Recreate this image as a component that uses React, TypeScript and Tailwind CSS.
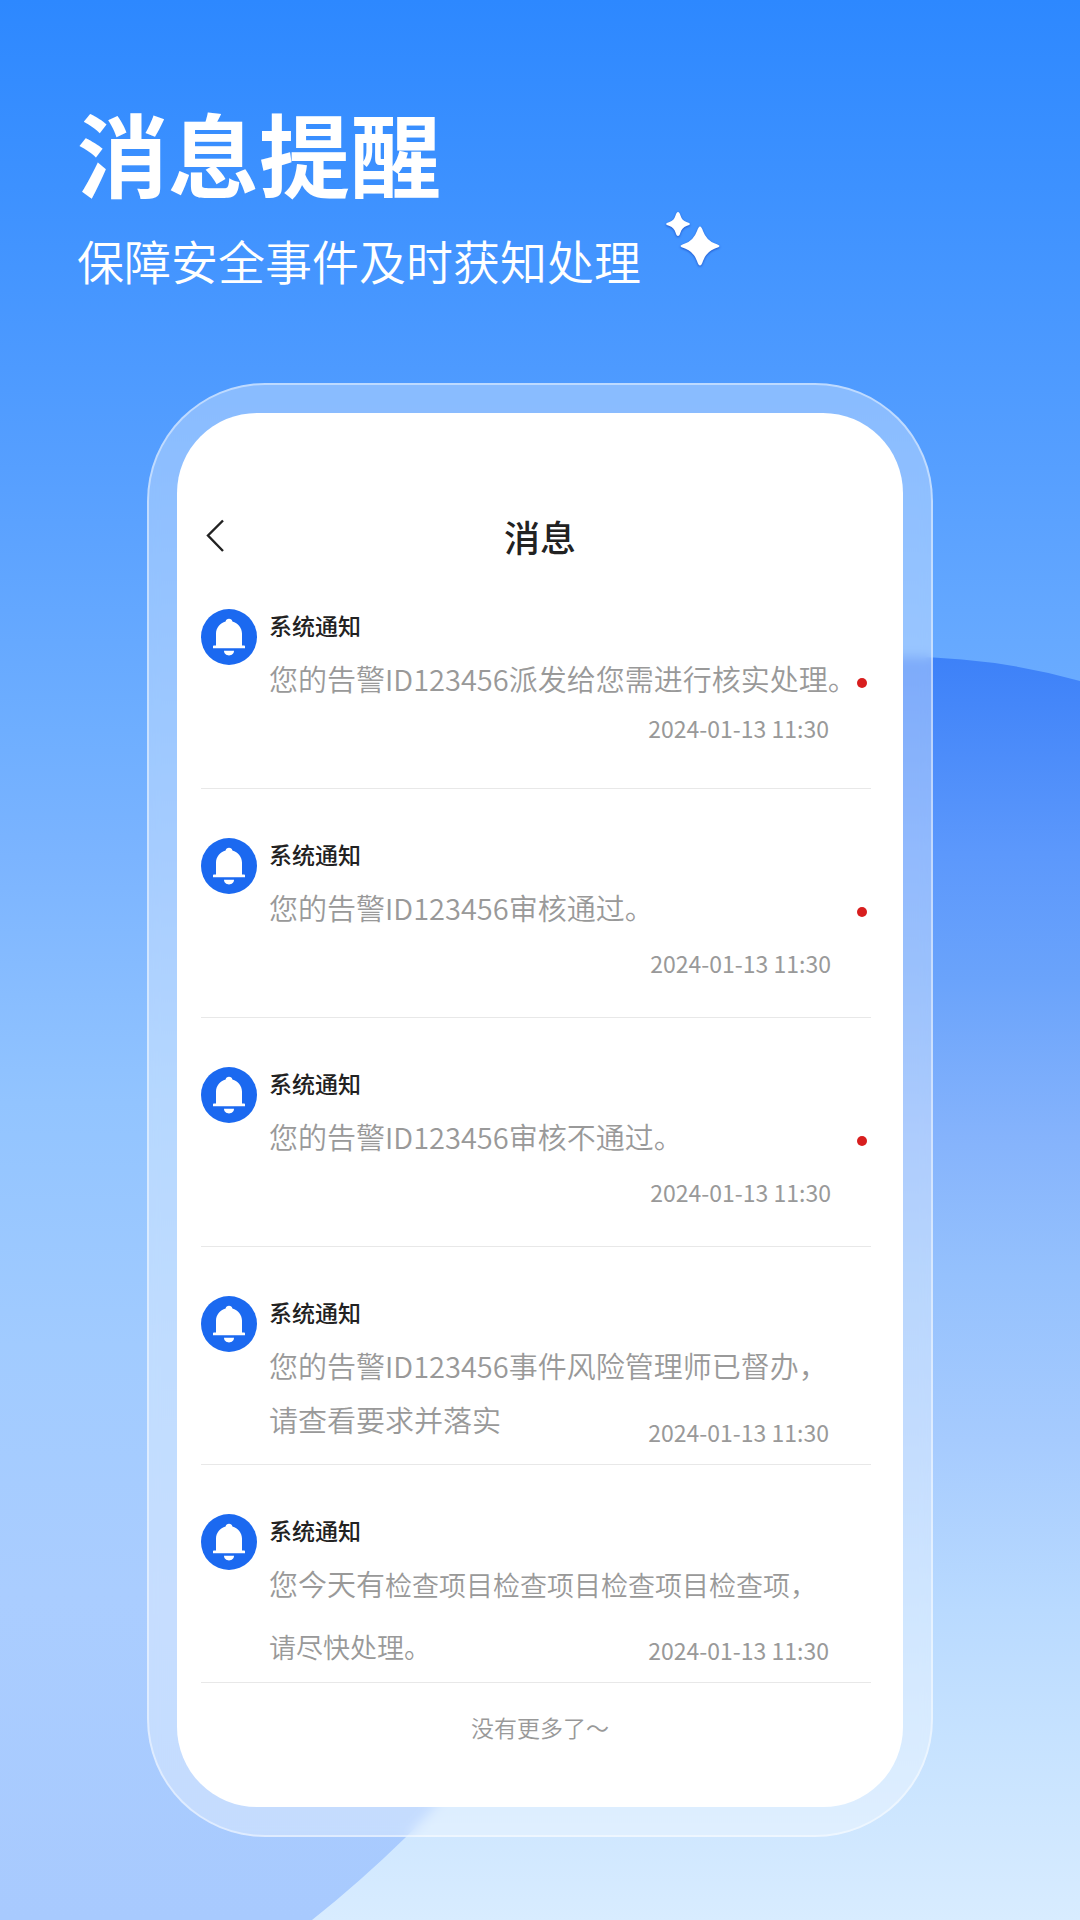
import { clsx } from "clsx";

interface Notice {
  lines: string[];
  // opening words set a step larger than the rest of the message
  lead?: string;
  time: string;
  unread?: boolean;
  size: "first" | "single" | "double" | "loose";
}

const notices: Notice[] = [
  {
    lines: ["您的告警ID123456派发给您需进行核实处理。"],
    time: "2024-01-13 11:30",
    unread: true,
    size: "first",
  },
  {
    lines: ["您的告警ID123456审核通过。"],
    time: "2024-01-13 11:30",
    unread: true,
    size: "single",
  },
  {
    lines: ["您的告警ID123456审核不通过。"],
    time: "2024-01-13 11:30",
    unread: true,
    size: "single",
  },
  {
    lines: ["您的告警ID123456事件风险管理师已督办，", "请查看要求并落实"],
    time: "2024-01-13 11:30",
    size: "double",
  },
  {
    lead: "您今天有",
    lines: ["检查项目检查项目检查项目检查项，", "请尽快处理。"],
    time: "2024-01-13 11:30",
    size: "loose",
  },
];

function Backdrop() {
  return (
    <svg
      className="absolute inset-0 h-full w-full"
      viewBox="0 0 1080 1920"
      preserveAspectRatio="none"
      aria-hidden="true"
    >
      <defs>
        <linearGradient id="wave" gradientUnits="userSpaceOnUse" x1="0" y1="657" x2="0" y2="1920">
          <stop offset="0" stopColor="#3d81f8" />
          <stop offset="0.155" stopColor="#5c98fc" />
          <stop offset="0.255" stopColor="#6aa3fb" />
          <stop offset="0.38" stopColor="#85b3fc" />
          <stop offset="0.49" stopColor="#95c1fd" />
          <stop offset="0.62" stopColor="#a6cbfe" />
          <stop offset="0.755" stopColor="#b9daff" />
          <stop offset="0.855" stopColor="#c6e2ff" />
          <stop offset="1" stopColor="#d8ecff" />
        </linearGradient>
      </defs>
      <path
        d="M312 1920Q360 1882 406 1837Q436 1807 470 1765C600 1600 500 657 905 657Q995 657 1080 681V1920Z"
        fill="url(#wave)"
      />
    </svg>
  );
}

function Sparkles() {
  return (
    <svg className="mb-5 ml-6 h-[58px] w-14 drop-shadow-[0_1px_1px_rgba(20,70,190,0.8)]" viewBox="0 0 56 58" fill="#fff" aria-hidden="true">
      <path d="M13 2Q14.500 2 15.500 5.500Q17 10.500 21.500 12Q25 13 25 14Q25 15 21.500 16Q17 17.500 15.500 22.500Q14.500 26 13 26Q11.500 26 10.500 22.500Q9 17.500 4.500 16Q1 15 1 14Q1 13 4.500 12Q9 10.500 10.500 5.500Q11.500 2 13 2Z" />
      <path d="M35 16.500Q36.500 16.500 38 21Q41.500 30.500 50 33.500Q54.500 35 54.500 36Q54.500 37 50 38.500Q41.500 41.500 38 51Q36.500 55.500 35 55.500Q33.500 55.500 32 51Q28.500 41.500 20 38.500Q15.500 37 15.500 36Q15.500 35 20 33.500Q28.500 30.500 32 21Q33.500 16.500 35 16.500Z" />
    </svg>
  );
}

function BellBadge() {
  return (
    <svg className="size-14 shrink-0" viewBox="0 0 56 56" aria-hidden="true">
      <circle cx="28" cy="28" r="28" fill="#1b69f0" />
      <g fill="#fff">
        <path d="M28 9.700C29.900 9.700 31 10.700 31.400 12.400C37 14 41 18.800 41 24.500V36.500H43.200Q44 36.500 44 37.300V39.300H12V37.300Q12 36.500 12.800 36.500H15V24.500C15 18.800 19 14 24.600 12.400C25 10.700 26.100 9.700 28 9.700Z" />
        <path d="M23 41.800H33C33 44.600 30.800 46.400 28 46.400S23 44.600 23 41.800Z" />
      </g>
    </svg>
  );
}

function NoticeRow({ notice }: { notice: Notice }) {
  const { lines, lead, time, unread, size } = notice;
  const tall = size === "double" || size === "loose";

  return (
    <li className="flex gap-3 border-b border-[#e8e8e8] pt-[49px]">
      <BellBadge />
      {/* message and time share one cell, the time sits at its foot */}
      <div className={clsx("grid flex-1", tall ? "min-h-[168px]" : "min-h-[179px]")}>
        <div className="col-start-1 row-start-1">
          <h2 className="text-[23px] leading-8 font-medium text-[#222]">系统通知</h2>
          <div
            className={clsx(
              "whitespace-nowrap text-[#999]",
              size === "loose" ? "mt-1.5 text-[27px] leading-[62px]" : "mt-2.5 text-[29px] leading-[54px]"
            )}
          >
            {lines.map((line, i) => (
              <div key={line} className="flex items-center justify-between">
                <p className="font-[350]">
                  {i === 0 && lead && <span className="text-[29px]">{lead}</span>}
                  {line}
                </p>
                {unread && <span className="mt-2.5 mr-1 size-2.5 rounded-full bg-[#d81e1e]" />}
              </div>
            ))}
          </div>
        </div>
        <time
          className={clsx(
            "col-start-1 row-start-1 self-end justify-self-end text-[23px] leading-8 text-[#999]",
            size === "single" ? "mr-10" : "mr-[42px]",
            size === "first" && "mb-11",
            size === "single" && "mb-[38px]",
            tall && "mb-4"
          )}
        >
          {time}
        </time>
      </div>
    </li>
  );
}

export default function App() {
  return (
    <div
      lang="zh-CN"
      className="relative min-h-screen overflow-hidden bg-[linear-gradient(180deg,#2d88ff_0%,#4294ff_12.8%,#58a0ff_25.5%,#6eaeff_38%,#7bb4ff_44.6%,#92c4ff_57.4%,#a1cbff_70%,#aacdff_83%,#a8cafe_100%)] pb-[83px] font-['Noto_Sans_CJK_SC',sans-serif]"
    >
      <Backdrop />

      <header className="relative pt-[101px] pl-[77px] text-white">
        <h1 className="text-[91px] leading-[100px] font-bold">消息提醒</h1>
        <div className="mt-[9px] flex items-end">
          <p className="text-[47px] leading-14 font-[350]">保障安全事件及时获知处理</p>
          <Sparkles />
        </div>
      </header>

      <main className="relative mx-[147px] mt-[95px] rounded-[118px] border-2 border-white/45 bg-white/33 p-7 backdrop-blur-[6px]">
        <div className="rounded-[80px] bg-white pt-[99px] pr-8 pb-16 pl-6">
          <div className="relative flex h-12 items-center justify-center">
            <button type="button" aria-label="返回" className="absolute left-[5px] text-[#222]">
              <svg className="h-9 w-5" viewBox="0 0 20 36" fill="none" stroke="currentColor" strokeWidth="2.400">
                <path d="M17 2.500L2 17.500L17 33" />
              </svg>
            </button>
            <h2 className="pl-2 text-[36px] leading-12 font-medium text-[#222]">消息</h2>
          </div>

          <ul>
            {notices.map((notice, i) => (
              <NoticeRow key={i} notice={notice} />
            ))}
          </ul>

          <p className="pt-7 pl-2 text-center text-[23px] leading-8 font-[350] text-[#999]">没有更多了～</p>
        </div>
      </main>
    </div>
  );
}
